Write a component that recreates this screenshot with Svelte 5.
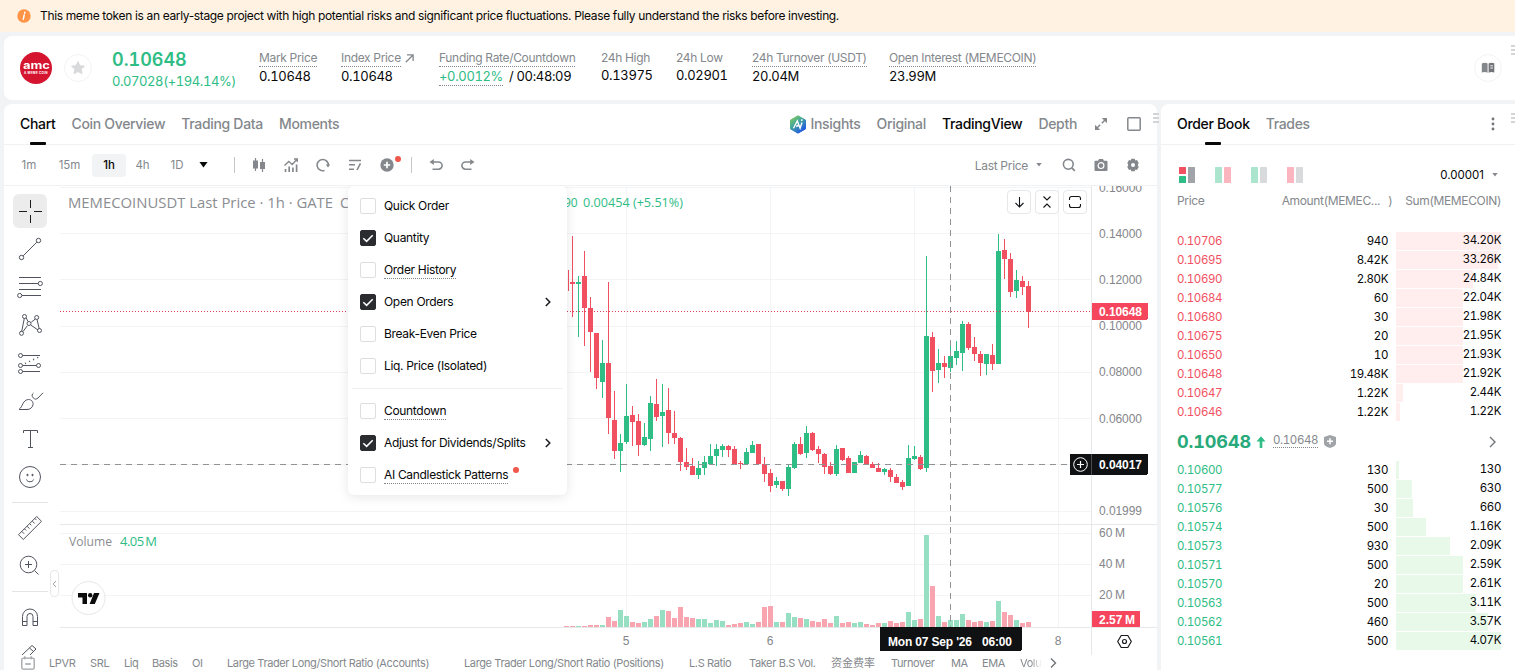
<script>
	const stats = [
		{ label: 'Mark Price', value: '0.10648', hint: true },
		{ label: 'Index Price', value: '0.10648', hint: true, link: true },
		{ label: 'Funding Rate/Countdown', rate: '+0.0012%', value: '/ 00:48:09', hint: true },
		{ label: '24h High', value: '0.13975' },
		{ label: '24h Low', value: '0.02901' },
		{ label: '24h Turnover (USDT)', value: '20.04M', hint: true },
		{ label: 'Open Interest (MEMECOIN)', value: '23.99M', hint: true },
	];

	const indicators = ['LPVR', 'SRL', 'Liq', 'Basis', 'OI', 'Large Trader Long/Short Ratio (Accounts)', 'Large Trader Long/Short Ratio (Positions)', 'L.S Ratio', 'Taker B.S Vol.', '资金费率', 'Turnover', 'MA', 'EMA', 'Volu'];

	const asks = [
		['0.10706', '940', '34.20K', 105],
		['0.10695', '8.42K', '33.26K', 102],
		['0.10690', '2.80K', '24.84K', 77],
		['0.10684', '60', '22.04K', 67],
		['0.10680', '30', '21.98K', 67],
		['0.10675', '20', '21.95K', 67],
		['0.10650', '10', '21.93K', 67],
		['0.10648', '19.48K', '21.92K', 67],
		['0.10647', '1.22K', '2.44K', 7],
		['0.10646', '1.22K', '1.22K', 4],
	];

	const bids = [
		['0.10600', '130', '130', 3],
		['0.10577', '500', '630', 16],
		['0.10576', '30', '660', 17],
		['0.10574', '500', '1.16K', 30],
		['0.10573', '930', '2.09K', 54],
		['0.10571', '500', '2.59K', 67],
		['0.10570', '20', '2.61K', 67],
		['0.10563', '500', '3.11K', 80],
		['0.10562', '460', '3.57K', 92],
		['0.10561', '500', '4.07K', 105],
	];

	let menu = $state([
		{ label: 'Quick Order', on: false },
		{ label: 'Quantity', on: true },
		{ label: 'Order History', on: false, hint: true },
		{ label: 'Open Orders', on: true, more: true },
		{ label: 'Break-Even Price', on: false },
		{ label: 'Liq. Price (Isolated)', on: false },
		{ label: 'Countdown', on: false, hint: true, split: true },
		{ label: 'Adjust for Dividends/Splits', on: true, more: true },
		{ label: 'AI Candlestick Patterns', on: false, hint: true, dot: true },
	]);

	// up, high, low, body top, body bottom, volume height
	const candles = [
		[0, 236, 317, 282, 284, 1], [1, 276, 337, 282, 284, 1], [0, 251, 346, 276, 308, 1], [0, 297, 372, 308, 332, 2],
		[0, 333, 389, 333, 378, 2], [1, 340, 398, 363, 382, 2], [0, 282, 434, 363, 418, 10], [0, 391, 459, 420, 451, 6],
		[1, 434, 472, 443, 451, 17], [1, 384, 444, 416, 442, 11], [0, 406, 446, 415, 422, 5], [0, 414, 456, 421, 445, 4],
		[1, 423, 446, 437, 445, 5], [1, 396, 451, 403, 439, 8], [0, 379, 421, 404, 417, 11], [1, 384, 447, 412, 416, 17],
		[0, 388, 444, 410, 433, 16], [0, 411, 444, 433, 438, 9], [0, 437, 471, 438, 462, 20], [0, 448, 470, 462, 467, 10],
		[0, 458, 475, 466, 475, 9], [1, 461, 479, 468, 475, 8], [1, 456, 475, 462, 468, 8], [1, 444, 464, 456, 464, 4],
		[1, 444, 466, 449, 456, 7], [1, 444, 457, 446, 450, 6], [0, 445, 457, 446, 450, 2], [0, 446, 464, 449, 464, 3],
		[0, 461, 469, 463, 464, 4], [1, 448, 464, 452, 464, 5], [1, 441, 453, 445, 453, 3], [0, 444, 464, 444, 464, 5],
		[0, 457, 482, 464, 474, 20], [0, 469, 492, 473, 486, 21], [1, 477, 488, 481, 485, 5], [0, 481, 491, 481, 489, 5],
		[1, 465, 496, 467, 489, 14], [1, 442, 469, 444, 468, 10], [0, 437, 455, 444, 454, 9], [1, 426, 458, 433, 453, 8],
		[0, 432, 451, 433, 450, 6], [0, 446, 463, 449, 454, 5], [0, 453, 474, 454, 467, 8], [0, 462, 475, 466, 474, 4],
		[1, 445, 476, 449, 474, 11], [0, 448, 461, 448, 460, 4], [0, 456, 473, 458, 473, 5], [1, 462, 473, 462, 473, 4],
		[1, 451, 463, 455, 463, 5], [0, 455, 465, 456, 464, 3], [0, 462, 468, 464, 468, 2], [0, 463, 472, 468, 472, 4],
		[1, 468, 475, 469, 472, 4], [0, 468, 482, 470, 477, 6], [0, 474, 483, 477, 483, 4], [0, 480, 490, 482, 487, 5],
		[1, 445, 486, 458, 486, 15], [1, 446, 460, 456, 459, 7], [0, 455, 470, 457, 469, 8], [1, 256, 472, 336, 468, 92],
		[0, 332, 392, 337, 371, 41], [1, 349, 383, 363, 370, 11], [0, 356, 378, 363, 367, 5], [1, 345, 372, 356, 368, 7],
		[1, 341, 365, 351, 358, 7], [1, 321, 371, 324, 353, 13], [0, 322, 350, 324, 348, 7], [0, 337, 361, 347, 354, 5],
		[0, 351, 376, 354, 363, 6], [1, 354, 375, 354, 364, 5], [0, 344, 370, 355, 364, 6], [1, 234, 364, 251, 364, 26],
		[0, 239, 279, 250, 259, 15], [0, 253, 297, 259, 292, 12], [1, 270, 298, 280, 291, 7], [0, 276, 295, 281, 287, 4],
		[0, 281, 328, 286, 312, 5],
	];

	const rows = [187, 233, 279, 326, 372, 418, 464, 511, 533, 564, 595];
	const days = [626, 770, 914, 1058];
	const prices = [['0.16000', 187], ['0.14000', 233], ['0.12000', 279], ['0.10000', 325], ['0.08000', 371], ['0.06000', 418], ['0.01999', 510]];
	const volumes = [['60\u2009M', 532], ['40\u2009M', 563], ['20\u2009M', 594]];
</script>

{#snippet caret(size)}
	<svg class="caret" width={size} height={size * 0.6} viewBox="0 0 10 6"><path d="M0.5 0h9L5 6z" fill="currentColor" /></svg>
{/snippet}

{#snippet book(rows, side)}
	<div class="book {side}">
		{#each rows as [price, amount, sum, bar]}
			<div class="book-row">
				<span class="price">{price}</span>
				<span class="amount">{amount}</span>
				<span class="sum"><i style="width: {bar}px"></i><b>{sum}</b></span>
			</div>
		{/each}
	</div>
{/snippet}

<div class="page">
	<div class="banner">
		<svg width="14" height="14" viewBox="0 0 14 14"><circle cx="7" cy="7" r="6.7" fill="#ff9447" /><path d="M7.9 3.2l-.2 1M7.2 5.9l-.9 4.4" stroke="#fff" stroke-width="1.5" stroke-linecap="round" /></svg>
		<span>This meme token is an early-stage project with high potential risks and significant price fluctuations. Please fully understand the risks before investing.</span>
	</div>

	<header class="ticker">
		<div class="coin"><span>amc</span><small>A MEME COIN</small></div>
		<div class="star">
			<svg width="14" height="14" viewBox="0 0 14 14"><path d="M7 .6l1.9 4.1 4.5.5-3.3 3 .9 4.5L7 10.5l-4 2.2.9-4.5-3.3-3 4.5-.5z" fill="#d8d9da" stroke="#d8d9da" stroke-linejoin="round" /></svg>
		</div>
		<div class="last">
			<strong>0.10648</strong>
			<span>0.07028(+194.14%)</span>
		</div>
		<div class="stats">
			{#each stats as s}
				<div class="stat">
					<div class="stat-label">
						<span class:hint={s.hint}>{s.label}</span>
						{#if s.link}<svg width="9" height="9" viewBox="0 0 9 9"><path d="M.8 8.2L8 1M2 .9h6.1V7" fill="none" stroke="#84888c" stroke-width="1.3" /></svg>{/if}
					</div>
					<div class="stat-value">{#if s.rate}<span class="rate hint">{s.rate}</span>{/if}<span>{s.value}</span></div>
				</div>
			{/each}
		</div>
		<div class="guide">
			<svg width="14" height="12" viewBox="0 0 14 12"><path d="M.8 1.6C3 .4 5 .5 6.6 1.6v9.2C5 9.8 3 9.7.8 10.6z" fill="#84888c" /><path d="M7.6 1.6C9.2 .4 11 .4 13.3 1.300v9.300c-2-.8-4-.8-5.700.2z" fill="#717478" /><path d="M9.300 3.800h2.600M9.300 6h2.600" stroke="#fff" stroke-width=".9" /></svg>
		</div>
		<div class="drag"></div>
	</header>

	<div class="body">
		<section class="chart-card">
			<div class="tabs">
				<div class="tabs-left">
					<span class="tab active">Chart</span>
					<span class="tab">Coin Overview</span>
					<span class="tab">Trading Data</span>
					<span class="tab">Moments</span>
				</div>
				<div class="tabs-right">
					<svg width="18" height="19" viewBox="0 0 18 19">
						<defs><linearGradient id="ai" x1="0" y1="0" x2=".7" y2="1"><stop offset="0" stop-color="#8bd04f" /><stop offset=".45" stop-color="#47a99a" /><stop offset="1" stop-color="#1c55e8" /></linearGradient></defs>
						<path d="M9 .8l7.500 4.300v8.800L9 18.200l-7.500-4.300V5.100z" fill="url(#ai)" stroke="url(#ai)" stroke-linejoin="round" />
						<path d="M4.500 13.300L8.300 6l2.800 7.200 1.900-5.700M7.200 11.500l2.600-1.300M12.800 4.300v1.700" fill="none" stroke="#fff" stroke-width="1.400" />
					</svg>
					<span class="tab insights">Insights</span>
					<span class="tab">Original</span>
					<span class="tab active">TradingView</span>
					<span class="tab">Depth</span>
					<svg class="expand" width="12" height="12" viewBox="0 0 12 12"><path d="M6.800 5.200L10.500 1.500M5.200 6.800L1.500 10.500" stroke="#84888c" stroke-width="1.500" /><path d="M6.800 0H12v5.200zM0 6.800V12h5.200z" fill="#84888c" /></svg>
					<svg class="window" width="14" height="14" viewBox="0 0 14 14"><rect x=".8" y=".8" width="12.400" height="12.400" rx="1" fill="none" stroke="#84888c" stroke-width="1.500" /></svg>
				</div>
				<div class="drag"></div>
			</div>

			<div class="toolbar">
				<div class="intervals">
					<span>1m</span><span>15m</span><span class="current">1h</span><span>4h</span><span>1D</span>
				</div>
				<div class="pick">{@render caret(9)}</div>
				<div class="bar"></div>
				<div class="tools">
					<svg width="14" height="14" viewBox="0 0 14 14"><path d="M3.500 0v13M10.500 1v13" stroke="#84888c" stroke-width="1.200" /><path d="M1 2.500h5v8H1zM8 4h5v7H8z" fill="#84888c" /></svg>
					<svg width="14" height="14" viewBox="0 0 14 14"><path d="M1.500 14v-3M5.200 14V8.500M8.900 14V9.500M12.600 14V6.500" stroke="#84888c" stroke-width="1.700" /><path d="M.5 7.500L4.800 3.500l3.400 3L13 1.200M10 1h3.300v3" fill="none" stroke="#84888c" stroke-width="1.300" /></svg>
					<svg width="14" height="14" viewBox="0 0 14 14"><path d="M8.500 12.400A5.600 5.600 0 1 1 12.300 7.500" fill="none" stroke="#84888c" stroke-width="1.600" /><path d="M9.800 6.500h4.400L12 9.500z" fill="#84888c" /></svg>
					<svg width="14" height="14" viewBox="0 0 14 14"><path d="M1 2.500h12M1 6.800h6M1 11.200h5M12.500 5.300L9 12" fill="none" stroke="#84888c" stroke-width="1.600" /></svg>
					<span class="plus">
						<svg width="14" height="14" viewBox="0 0 14 14"><circle cx="7" cy="7" r="6.700" fill="#84888c" /><path d="M7 3.800v6.400M3.800 7h6.400" stroke="#fff" stroke-width="1.700" /></svg>
						<i class="red-dot"></i>
					</span>
				</div>
				<div class="bar second"></div>
				<div class="undo">
					<svg width="14" height="12" viewBox="0 0 14 12"><path d="M2 3h7.500a3.400 3.400 0 0 1 0 7.200H3.500" fill="none" stroke="#84888c" stroke-width="1.600" /><path d="M4.800 0v6L.5 3z" fill="#84888c" /></svg>
					<svg width="14" height="12" viewBox="0 0 14 12"><path d="M12 3H4.500a3.400 3.400 0 0 0 0 7.200h6" fill="none" stroke="#84888c" stroke-width="1.600" /><path d="M9.200 0v6l4.300-3z" fill="#84888c" /></svg>
				</div>
				<div class="toolbar-right">
					<span class="source">Last Price</span>
					{@render caret(6)}
					<svg class="search" width="14" height="14" viewBox="0 0 14 14"><circle cx="6.300" cy="6.300" r="4.900" fill="none" stroke="#84888c" stroke-width="1.600" /><path d="M9.800 9.800l3 3" stroke="#84888c" stroke-width="1.800" /></svg>
					<svg class="camera" width="14" height="14" viewBox="0 0 14 14"><path d="M1.500 2.800h2.600L5 1h4l.9 1.800h2.600a1 1 0 0 1 1 1V12a1 1 0 0 1-1 1h-11a1 1 0 0 1-1-1V3.800a1 1 0 0 1 1-1z" fill="#84888c" /><circle cx="7" cy="7.600" r="2.900" fill="none" stroke="#fff" stroke-width="1.200" /></svg>
					<svg width="14" height="14" viewBox="0 0 14 14"><path d="M5.300.8h3.400l.6 1.600 1.700-.3 1.700 2.900L11.700 7l1 2-1.700 2.900-1.700-.3-.6 1.600H5.300l-.6-1.600-1.700.3L1.300 9l1-2-1-2L3 2.100l1.700.3z" fill="#84888c" /><circle cx="7" cy="7" r="2" fill="#fff" /></svg>
				</div>
			</div>

			<div class="workspace">
				<aside class="drawing">
					<div class="tool selected"><svg width="28" height="28" viewBox="0 0 28 28"><path d="M14.500 3v8M14.500 18v8M3 14.500h8M18 14.500h8" stroke="#1b1c1f" fill="none" /></svg></div>
					<div class="tool"><svg width="28" height="28" viewBox="0 0 28 28"><path d="M7.200 20.800L20.800 7.200" /><circle cx="5.500" cy="22.500" r="2.200" /><circle cx="22.500" cy="5.500" r="2.200" /></svg></div>
					<div class="tool"><svg width="28" height="28" viewBox="0 0 28 28"><path d="M3 4.500h22M3 10.500h19M3 16.500h22M6 22.500h19" /><circle cx="24.300" cy="10.500" r="2.100" /><circle cx="3.700" cy="22.500" r="2.100" /></svg></div>
					<div class="tool"><svg width="28" height="28" viewBox="0 0 28 28"><path d="M5.700 20.500L8.300 7.300M10.200 7l1.800 3.400M7 20.600l4.300-5.800M15.300 11.200l4-3.200M15 14.200l7 4.800M21 8.500l2.300 9.500" /><circle cx="8.500" cy="5.500" r="2" /><circle cx="5.500" cy="22.300" r="2" /><circle cx="13" cy="12.500" r="2" /><circle cx="20.700" cy="6.500" r="2" /><circle cx="23.500" cy="19.500" r="2" /></svg></div>
					<div class="tool"><svg width="28" height="28" viewBox="0 0 28 28"><path d="M6.500 6.500H24M6.500 16.500h14M6.500 22.500H24" /><path d="M9 14.500l14-6.500" stroke-dasharray="1 3.500" stroke-width="1.500" /><circle cx="4.500" cy="6.500" r="2" /><circle cx="4.500" cy="16.500" r="2" /><circle cx="22.500" cy="16.500" r="2" /><circle cx="4.500" cy="22.500" r="2" /></svg></div>
					<div class="tool"><svg width="28" height="28" viewBox="0 0 28 28"><path d="M3 22.500c4-3 3.500-9.500 9.500-10 3 0 5 2.500 4.500 5.200-.5 3-3 4.800-6 4.800zM17.500 6c-1.800 1-1.800 3.400-.2 4.900 1.500 1.600 3.200 1.500 4.700.1l5-5.200" /></svg></div>
					<div class="tool"><svg width="28" height="28" viewBox="0 0 28 28"><path d="M7.500 8V5.500h14V8M14.500 5.500v17M12 22.500h5" /></svg></div>
					<div class="tool"><svg width="28" height="28" viewBox="0 0 28 28"><circle cx="14" cy="14" r="10.500" /><path d="M10.500 16.500c.5 3 6.500 3 7 0" /><circle cx="11.500" cy="12" r=".7" fill="#50535e" /><circle cx="16.500" cy="12" r=".7" fill="#50535e" /></svg></div>
					<div class="rule"></div>
					<div class="tool"><svg width="28" height="28" viewBox="0 0 28 28"><path d="M2.500 20.700L20.700 2.500l4.800 4.800L7.300 25.500zM5.800 17.400l2.400 2.400M8.400 14.800l1.700 1.700M11 12.200l2.400 2.400M13.600 9.600l1.700 1.700M16.200 7l2.400 2.400M18.800 4.400l1.700 1.700" /></svg></div>
					<div class="tool zoom-in"><svg width="28" height="28" viewBox="0 0 28 28"><circle cx="12.500" cy="12.500" r="8.300" /><path d="M12.500 9v7M9 12.500h7M18.500 18.500l4 4" /></svg></div>
					<div class="rule"></div>
					<div class="tool"><svg width="28" height="28" viewBox="0 0 28 28"><path d="M6.500 22.500v-9a7.500 7.500 0 0 1 15 0v9h-4.500v-9a3 3 0 0 0-6 0v9zM6.500 18.500H11M17 18.500h4.500" /></svg></div>
					<div class="tool"><svg width="28" height="28" viewBox="0 0 28 28"><path d="M5.500 14.500L16 4.500l4 3.500L9.500 18.500M13.500 7l4 3.500M3 14.500h5M21 14.500h4" /></svg></div>
				</aside>

				<div class="plot">
					<svg width="1097" height="469" viewBox="60 186 1097 469" shape-rendering="crispEdges">
						<g stroke="#f3f4f5">
							{#each rows as y}<path d="M60 {y + 0.5}H1091" />{/each}
							{#each days as x}<path d="M{x + 0.5} 187V627" />{/each}
						</g>
						<path d="M60 524.500H1157M60 627.500H1157M1091.500 186V655" stroke="#e6e8ea" />

						<rect x="564" y="626" width="5" height="1" fill="#f6a6b0" />
						{#each candles as [up, high, low, top, bottom, vol], i}
							<rect x={570 + i * 6} y={627 - vol} width="5" height={vol} fill={up ? '#96dfc3' : '#f8a5b0'} />
						{/each}
						<rect x="568" y="270" width="1" height="21" fill="#f15061" />
						{#each candles as [up, high, low, top, bottom], i}
							<g fill={up ? '#2ebd85' : '#f15061'}>
								<rect x={572 + i * 6} y={high} width="1" height={low - high} />
								<rect x={570 + i * 6} y={top} width="5" height={bottom - top} />
							</g>
						{/each}

						<path d="M60 311.500H1091" stroke="#e23f55" stroke-dasharray="1 2" />
						<path d="M60 464.500H1070M950.500 186V627" stroke="#909294" stroke-dasharray="6 5" />

						<g class="axis">
							{#each prices as [label, y]}<text x="1099" y={y + 5} textLength="43">{label}</text>{/each}
							{#each volumes as [label, y]}<text x="1099" y={y + 5} textLength="26">{label}</text>{/each}
							<text x="626" y="645" text-anchor="middle">5</text>
							<text x="770" y="645" text-anchor="middle">6</text>
							<text x="1058" y="645" text-anchor="middle">8</text>
						</g>

						<g class="legend">
							<text x="68" y="208" textLength="265" lengthAdjust="spacingAndGlyphs">MEMECOINUSDT Last Price · 1h · GATE</text>
							<text x="340" y="208">C</text>
							<text x="564" y="207" class="up">90</text>
							<text x="583" y="207" class="up" textLength="100" lengthAdjust="spacingAndGlyphs">0.00454 (+5.51%)</text>
							<text x="69" y="546" class="vol" textLength="43" lengthAdjust="spacingAndGlyphs">Volume</text>
							<text x="120" y="546" class="vol up" textLength="37">4.05{'\u2009'}M</text>
						</g>

						<g class="flag">
							<path d="M1092 303h54a2 2 0 0 1 2 2v13a2 2 0 0 1-2 2h-54zM1092 611h48v16h-48z" fill="#f6465d" />
							<path d="M1070 454h76a2 2 0 0 1 2 2v17a2 2 0 0 1-2 2h-76zM880 627h142v22a2 2 0 0 1-2 2H882a2 2 0 0 1-2-2z" fill="#101112" />
							<path d="M1091.500 454v21" stroke="#4a4c4f" />
							<text x="1099" y="316" textLength="43">0.10648</text>
							<text x="1099" y="624" textLength="36">2.57{'\u2009'}M</text>
							<text x="1099" y="469" textLength="43">0.04017</text>
							<text x="888" y="646" textLength="84">Mon 07 Sep '26</text>
							<text x="982" y="646" textLength="30">06:00</text>
						</g>
						<g shape-rendering="auto" fill="none">
							<circle cx="1080.500" cy="464.500" r="6.800" stroke="#fff" />
							<path d="M1080.500 461v7M1077 464.500h7" stroke="#fff" stroke-width="1.200" />
							<path d="M1121.200 635.500h6.600l3.500 6-3.500 6h-6.600l-3.500-6z" stroke="#1b1c1f" stroke-width="1.200" stroke-linejoin="round" />
							<circle cx="1124.500" cy="641.500" r="2" stroke="#1b1c1f" stroke-width="1.200" />
							<circle cx="88.500" cy="598" r="16.500" fill="#fff" stroke="#e6e7e9" />
							<path d="M78 593h9v11h-4.500v-6.500H78zM94 593h5.500l-4.700 11h-5.200z" fill="#0c0c0d" />
							<circle cx="90.200" cy="595.200" r="2.200" fill="#0c0c0d" />
						</g>
					</svg>

					<div class="pane-buttons">
						<span><svg width="14" height="14" viewBox="0 0 14 14"><path d="M7.500 2v10M3.500 8l4 4 4-4" /></svg></span>
						<span><svg width="14" height="14" viewBox="0 0 14 14"><path d="M3.500 1.500L7 5l3.500-3.500M3.500 12.500L7 9l3.500 3.500" /></svg></span>
						<span><svg width="14" height="14" viewBox="0 0 14 14"><path d="M1.500 5V3.500a2 2 0 0 1 2-2h7a2 2 0 0 1 2 2V5M1.500 9v1.500a2 2 0 0 0 2 2h7a2 2 0 0 0 2-2V9" /></svg></span>
					</div>

					<div class="collapse"><svg width="5" height="8" viewBox="0 0 5 8"><path d="M4 1L1.200 4 4 7" fill="none" stroke="#a3a6aa" /></svg></div>

					<div class="menu">
						{#each menu as item}
							{#if item.split}<div class="menu-rule"></div>{/if}
							<label class="menu-item">
								<input type="checkbox" bind:checked={item.on} />
								<span class="box">
									{#if item.on}<svg width="12" height="9" viewBox="0 0 12 9"><path d="M1.300 4.200l3.300 3.200L10.700 1.200" fill="none" stroke="#fff" stroke-width="1.500" /></svg>{/if}
								</span>
								<span class="menu-text" class:hint={item.hint}>{item.label}</span>
								{#if item.dot}<i class="red-dot"></i>{/if}
								{#if item.more}<svg class="more" width="6" height="10" viewBox="0 0 6 10"><path d="M.8 1l4 4-4 4" fill="none" stroke="#1b1c1f" stroke-width="1.500" /></svg>{/if}
							</label>
						{/each}
					</div>
				</div>
			</div>

			<div class="indicators">
				<svg width="14" height="14" viewBox="0 0 14 14"><rect x=".8" y="2.200" width="12.400" height="11" rx="1.500" fill="none" stroke="#a0a3a7" stroke-width="1.300" /><path d="M3.800.3v3M10.200.3v3M4.200 8h5.600" stroke="#a0a3a7" stroke-width="1.300" /></svg>
				{#each indicators as name}<span>{name}</span>{/each}
				<svg class="next" width="7" height="10" viewBox="0 0 7 10"><path d="M1 .5L5.500 5 1 9.500" fill="none" stroke="#717478" stroke-width="1.400" /></svg>
			</div>
		</section>

		<section class="book-card">
			<div class="tabs">
				<div class="tabs-left">
					<span class="tab active">Order Book</span>
					<span class="tab">Trades</span>
				</div>
				<svg class="dots" width="4" height="14" viewBox="0 0 4 14"><circle cx="2" cy="2" r="1.400" /><circle cx="2" cy="7" r="1.400" /><circle cx="2" cy="12" r="1.400" /></svg>
				<div class="drag"></div>
			</div>
			<div class="modes">
				<svg width="16" height="16" viewBox="0 0 16 16"><rect width="7" height="7" rx=".5" fill="#f15061" /><rect y="9" width="7" height="7" rx=".5" fill="#2ebd85" /><rect x="9" width="7" height="16" rx=".5" fill="#a0a3a7" /></svg>
				<svg width="16" height="16" viewBox="0 0 16 16"><rect width="7" height="16" rx=".5" fill="#abe5ce" /><rect x="9" width="7" height="16" rx=".5" fill="#fab5be" /></svg>
				<svg width="16" height="16" viewBox="0 0 16 16"><rect width="7" height="16" rx=".5" fill="#abe5ce" /><rect x="9" width="7" height="16" rx=".5" fill="#d9dadc" /></svg>
				<svg width="16" height="16" viewBox="0 0 16 16"><rect width="7" height="16" rx=".5" fill="#fab5be" /><rect x="9" width="7" height="16" rx=".5" fill="#d9dadc" /></svg>
				<span class="step">0.00001</span>
				{@render caret(6)}
			</div>
			<div class="book-head">
				<span>Price</span>
				<span class="amount-head">Amount(MEMEC...</span>
				<span>)</span>
				<span class="sum-head">Sum(MEMECOIN)</span>
			</div>
			{@render book(asks, 'asks')}
			<div class="mid">
				<strong>0.10648</strong>
				<svg width="10" height="12" viewBox="0 0 10 12"><path d="M5 .3l4.500 5.200H6.300V12H3.700V5.500H.5z" fill="#2ebd85" /></svg>
				<span class="mark hint">0.10648</span>
				<svg width="12" height="13" viewBox="0 0 12 13"><path d="M6 0l6 2v6.500c0 2-3 3.500-6 4.500-3-1-6-2.500-6-4.500V2z" fill="#a0a3a7" /><path d="M6 3.300v6M3 6.300h6" stroke="#fff" stroke-width="1.500" /></svg>
				<svg class="arrow" width="7" height="12" viewBox="0 0 7 12"><path d="M1 1l5 5-5 5" fill="none" stroke="#717478" stroke-width="1.400" /></svg>
			</div>
			{@render book(bids, 'bids')}
		</section>
	</div>
</div>

<style>
	:global(body) {
		background: #f2f3f4;
		overflow: hidden;
	}

	.page {
		width: 1515px;
		height: 670px;
		overflow: hidden;
		background: #f2f3f4;
		font-family: Inter, "Noto Sans CJK SC", sans-serif;
		color: #070808;
		font-size: 12px;
		display: flex;
		flex-direction: column;
	}

	svg {
		display: block;
		flex: none;
	}

	span {
		white-space: nowrap;
	}

	.hint {
		border-bottom: 1px dotted #84888c;
	}

	.banner {
		height: 32px;
		flex: none;
		background: #fff2e2;
		display: flex;
		align-items: center;
		gap: 9px;
		padding-left: 17px;
		letter-spacing: -0.355px;
	}

	.banner span {
		padding-bottom: 1px;
	}

	/* price header */
	.ticker {
		height: 64px;
		flex: none;
		margin: 4px 0 4px 4px;
		background: #fff;
		border-radius: 8px 0 0 8px;
		display: flex;
		align-items: center;
		padding-left: 16px;
		position: relative;
	}

	.coin {
		width: 32px;
		height: 32px;
		border-radius: 50%;
		background: #d5142f;
		color: #fff;
		display: flex;
		flex-direction: column;
		align-items: center;
		justify-content: center;
	}

	.coin span {
		font-size: 11px;
		font-weight: 700;
		line-height: 9px;
		transform: scaleX(1.18);
	}

	.coin small {
		font-size: 3px;
		font-weight: 700;
		line-height: 4px;
		margin-top: 1px;
		letter-spacing: 0.3px;
	}

	.star, .guide {
		width: 26px;
		height: 26px;
		border: 1px solid #f2f3f4;
		border-radius: 50%;
		display: flex;
		align-items: center;
		justify-content: center;
	}

	.star {
		margin-left: 12px;
	}

	.guide {
		margin-left: auto;
		margin-right: 13px;
	}

	.last {
		width: 147px;
		margin-left: 20px;
		padding-top: 4px;
		color: #2ebd85;
		display: flex;
		flex-direction: column;
		font-variant-numeric: tabular-nums;
	}

	.last strong {
		font-size: 18px;
		font-weight: 600;
		line-height: 22px;
	}

	.last span {
		font-size: 13px;
		line-height: 20px;
		letter-spacing: -0.42px;
	}

	.stats {
		display: grid;
		grid-template-columns: 82px 98px 162px 75px 76px 137px auto;
	}

	.stat-label {
		display: flex;
		align-items: center;
		gap: 4px;
		color: #84888c;
		letter-spacing: -0.33px;
		line-height: 16px;
	}

	.stat-value {
		margin-top: 1px;
		line-height: 17px;
		font-size: 13px;
		letter-spacing: -0.35px;
		display: flex;
		gap: 6px;
		font-variant-numeric: tabular-nums;
	}

	.rate {
		color: #2ebd85;
	}

	.drag {
		position: absolute;
		right: -2px;
		top: 9px;
		width: 6px;
		height: 2px;
		background: #d2d4d6;
		box-shadow: 0 4px #d2d4d6, 0 8px #d2d4d6;
	}

	.body {
		flex: 1;
		min-height: 0;
		display: flex;
		gap: 4px;
		padding-left: 4px;
	}

	.chart-card {
		width: 1153px;
		flex: none;
		background: #fff;
		border-radius: 8px 8px 0 0;
		display: flex;
		flex-direction: column;
	}

	.book-card {
		flex: 1;
		background: #fff;
		border-radius: 8px 0 0 0;
	}

	/* tab rows */
	.tabs {
		height: 40px;
		flex: none;
		border-bottom: 1px solid #f0f1f2;
		display: flex;
		align-items: center;
		justify-content: space-between;
		padding: 0 16px;
		position: relative;
	}

	.tabs-left {
		display: flex;
		gap: 16px;
		height: 100%;
	}

	.tab {
		font-size: 14px;
		line-height: 40px;
		color: #84888c;
		letter-spacing: -0.32px;
		font-weight: 450;
		position: relative;
	}

	.tab.active {
		color: #070808;
		font-weight: 500;
		letter-spacing: -0.32px;
	}

	.tabs-left .active::after {
		content: "";
		position: absolute;
		left: calc(50% - 8px);
		bottom: -1px;
		width: 16px;
		height: 3px;
		border-radius: 1px;
		background: #070808;
	}

	.tabs-right {
		display: flex;
		align-items: center;
		gap: 16px;
	}

	.insights {
		margin-left: -12px;
	}

	.expand {
		margin-left: 2px;
	}

	.window {
		margin-left: 4px;
	}

	.dots {
		fill: #717478;
		margin-right: 4px;
	}

	/* interval + tools row */
	.toolbar {
		height: 40px;
		flex: none;
		border-bottom: 1px solid #f0f1f2;
		display: flex;
		align-items: center;
		color: #84888c;
	}

	.intervals {
		display: grid;
		grid-template-columns: 40px 41px 36px 33px 36px;
		padding-left: 5px;
		font-size: 11.5px;
	}

	.intervals span {
		text-align: center;
		line-height: 23px;
		border-radius: 4px;
	}

	.intervals .current {
		margin-left: 2px;
		background: #f2f3f4;
		color: #070808;
		font-weight: 500;
	}

	.pick {
		color: #070808;
		margin-left: 4px;
	}

	.bar {
		width: 1px;
		height: 16px;
		background: #c4c7ca;
		margin-left: 26px;
	}

	.bar.second {
		margin-left: 17px;
	}

	.tools {
		display: flex;
		gap: 18px;
		margin-left: 17px;
	}

	.plus {
		position: relative;
	}

	.red-dot {
		width: 6px;
		height: 6px;
		border-radius: 50%;
		background: #f0574a;
	}

	.plus .red-dot {
		position: absolute;
		left: 15px;
		top: -2px;
	}

	.undo {
		display: flex;
		gap: 18px;
		margin-left: 17px;
	}

	.toolbar-right {
		display: flex;
		align-items: center;
		margin-left: auto;
		padding-right: 17px;
	}

	.source {
		margin-right: 8px;
		letter-spacing: -0.3px;
	}

	.search {
		margin-left: 20px;
	}

	.camera {
		margin: 0 18px;
	}

	.workspace {
		height: 469px;
		flex: none;
		overflow: hidden;
		display: flex;
	}

	.drawing {
		width: 56px;
		flex: none;
		padding-top: 6px;
		box-sizing: border-box;
	}

	.tool {
		height: 38px;
		display: flex;
		align-items: center;
		justify-content: center;
		margin-right: 4px;
	}

	.tool.zoom-in {
		height: 38px;
	}

	.tool svg {
		fill: none;
		stroke: #50535e;
		stroke-width: 1;
	}

	.tool.selected svg {
		background: #ececed;
		border-radius: 6px;
		padding: 3px;
	}

	.rule {
		height: 1px;
		margin: 6px 12px 6px 8px;
		background: #e2e4e6;
	}

	/* chart */
	.plot {
		position: relative;
		width: 1097px;
	}

	.axis text {
		font: 12px "Liberation Sans", sans-serif;
		fill: #84868a;
	}

	.legend text {
		font-family: "Open Sans", "Noto Sans", sans-serif;
		font-size: 14px;
		font-weight: 500;
		fill: #8b8d91;
	}

	.legend .up {
		fill: #2ebd85;
		font-size: 12px;
	}

	.legend .vol {
		font-size: 13px;
	}

	.flag text {
		font: bold 12px "Liberation Sans", sans-serif;
		fill: #fff;
	}

	.pane-buttons {
		position: absolute;
		right: 70px;
		top: 4px;
		display: flex;
		gap: 4px;
	}

	.pane-buttons span {
		width: 22px;
		height: 22px;
		border: 1px solid #e6e7e9;
		border-radius: 4px;
		background: #fff;
		display: flex;
		align-items: center;
		justify-content: center;
	}

	.pane-buttons svg {
		fill: none;
		stroke: #131416;
		stroke-width: 1.1;
	}

	.collapse {
		position: absolute;
		left: -10px;
		top: 384px;
		width: 7px;
		height: 25px;
		border: 1px solid #e6e7e9;
		border-radius: 4px;
		display: flex;
		align-items: center;
		justify-content: center;
	}

	/* order overlay menu */
	.menu {
		position: absolute;
		left: 288px;
		top: 0;
		width: 219px;
		height: 309px;
		box-sizing: border-box;
		padding: 4px 0;
		background: #fff;
		border-radius: 6px;
		box-shadow: 0 2px 12px rgba(0, 0, 0, 0.1);
	}

	.menu-item {
		height: 32px;
		display: flex;
		align-items: center;
		padding: 0 16px 0 12px;
	}

	.menu-item input {
		display: none;
	}

	.box {
		width: 14px;
		height: 14px;
		border: 1px solid #dcdee0;
		border-radius: 2px;
		margin-right: 8px;
		display: flex;
		align-items: center;
		justify-content: center;
	}

	input:checked + .box {
		background: #2b2c30;
		border-color: #2b2c30;
	}

	.menu-text {
		letter-spacing: -0.32px;
		line-height: 16px;
		border-bottom: 1px solid transparent;
	}

	.menu-text.hint {
		border-bottom: 1px dotted #84888c;
	}

	.menu .red-dot {
		margin: -10px 0 0 5px;
	}

	.more {
		margin-left: auto;
	}

	.menu-rule {
		height: 1px;
		margin: 6px 4px;
		background: #eff0f1;
	}

	/* bottom strip */
	.indicators {
		height: 15px;
		overflow: hidden;
		display: grid;
		grid-template-columns: 28px 41px 34px 28px 40px 35px 237px 225px 60px 82px 60px 60px 31px 38px 22px auto;
		padding: 1px 0 0 17px;
		font-size: 11px;
		line-height: 15px;
		color: #84888c;
		letter-spacing: -0.38px;
		position: relative;
	}

	.indicators span:nth-last-of-type(5) {
		letter-spacing: 0;
	}

	.indicators span:last-of-type {
		overflow: hidden;
		-webkit-mask-image: linear-gradient(90deg, #000 50%, transparent);
		mask-image: linear-gradient(90deg, #000 50%, transparent);
	}

	.next {
		margin: 2px 0 0 8px;
	}

	/* order book */
	.modes {
		display: flex;
		align-items: center;
		gap: 20px;
		height: 16px;
		margin: 22px 17px 0 18px;
		color: #84888c;
	}

	.step {
		margin-left: auto;
		color: #070808;
		font-size: 11.5px;
		margin-right: -12px;
	}

	.book-head {
		display: flex;
		color: #84888c;
		line-height: 16px;
		margin: 10px 14px 0 16px;
		letter-spacing: -0.35px;
	}

	.amount-head {
		margin-left: auto;
		margin-right: 8px;
	}

	.sum-head {
		margin-left: 13px;
	}

	.asks {
		margin-top: 23px;
	}

	.book-row {
		height: 19px;
		line-height: 19px;
		font-size: 11.5px;
		letter-spacing: -0.38px;
		display: grid;
		grid-template-columns: 90px 1fr 105px;
		padding: 0 14px 0 16px;
		font-variant-numeric: tabular-nums;
	}

	.asks .price {
		color: #f15061;
	}

	.bids .price {
		color: #2ebd85;
	}

	.amount {
		text-align: right;
		padding-right: 8px;
	}

	.sum {
		position: relative;
		text-align: right;
		height: 18px;
		line-height: 17px;
	}

	.sum i {
		position: absolute;
		left: 0;
		top: 0;
		height: 18px;
		background: #ffeeed;
	}

	.bids .sum i {
		background: #e8f9ea;
	}

	.sum b {
		position: relative;
		font-weight: 400;
	}

	.mid {
		height: 39px;
		display: flex;
		align-items: center;
		padding: 0 19px 0 16px;
		font-variant-numeric: tabular-nums;
	}

	.mid strong {
		font-size: 18px;
		font-weight: 700;
		color: #27a97a;
		letter-spacing: -0.1px;
		margin-right: 5px;
	}

	.mark {
		margin: 0 6px 2px 7px;
		font-size: 11.5px;
		color: #84888c;
		letter-spacing: -0.38px;
		line-height: 14px;
	}

	.arrow {
		margin-left: auto;
	}
</style>
